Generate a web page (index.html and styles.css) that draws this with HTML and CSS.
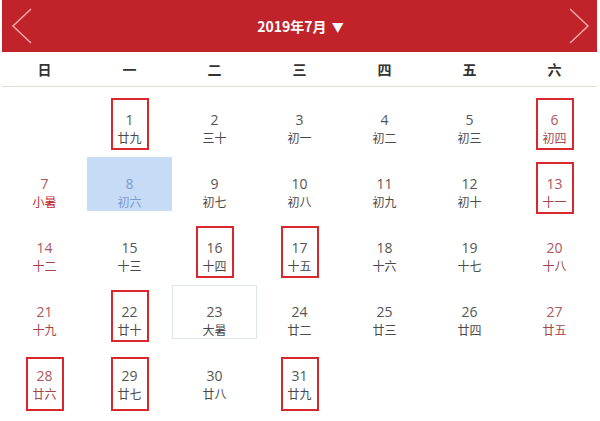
FILE: index.html
```html
<!DOCTYPE html>
<html lang="zh">
<head>
<meta charset="utf-8">
<link rel="stylesheet" href="styles.css">
</head>
<body>
<div class="cal">
  <div class="head">
    <svg class="nav" width="24" height="36" viewBox="0 0 24 36"><polyline points="21,1 3,18 21,35" fill="none" stroke="#f2a3a3" stroke-width="1.6"/></svg>
    <div class="title">2019年7月 <span class="tri">▼</span></div>
    <svg class="nav" width="24" height="36" viewBox="0 0 24 36"><polyline points="3,1 21,18 3,35" fill="none" stroke="#f2a3a3" stroke-width="1.6"/></svg>
  </div>
  <div class="week">
    <span>日</span><span>一</span><span>二</span><span>三</span><span>四</span><span>五</span><span>六</span>
  </div>
  <div class="grid">
    <div class="cell"></div>
    <div class="cell mark"><b>1</b><i>廿九</i></div>
    <div class="cell"><b>2</b><i>三十</i></div>
    <div class="cell"><b>3</b><i>初一</i></div>
    <div class="cell"><b>4</b><i>初二</i></div>
    <div class="cell"><b>5</b><i>初三</i></div>
    <div class="cell we mark"><b>6</b><i>初四</i></div>

    <div class="cell we"><b>7</b><i class="term">小暑</i></div>
    <div class="cell sel"><b>8</b><i>初六</i></div>
    <div class="cell"><b>9</b><i>初七</i></div>
    <div class="cell"><b>10</b><i>初八</i></div>
    <div class="cell"><b>11</b><i>初九</i></div>
    <div class="cell"><b>12</b><i>初十</i></div>
    <div class="cell we mark"><b>13</b><i>十一</i></div>

    <div class="cell we"><b>14</b><i>十二</i></div>
    <div class="cell"><b>15</b><i>十三</i></div>
    <div class="cell mark"><b>16</b><i>十四</i></div>
    <div class="cell mark"><b>17</b><i>十五</i></div>
    <div class="cell"><b>18</b><i>十六</i></div>
    <div class="cell"><b>19</b><i>十七</i></div>
    <div class="cell we"><b>20</b><i>十八</i></div>

    <div class="cell we"><b>21</b><i>十九</i></div>
    <div class="cell mark"><b>22</b><i>廿十</i></div>
    <div class="cell today"><b>23</b><i>大暑</i></div>
    <div class="cell"><b>24</b><i>廿二</i></div>
    <div class="cell"><b>25</b><i>廿三</i></div>
    <div class="cell"><b>26</b><i>廿四</i></div>
    <div class="cell we"><b>27</b><i>廿五</i></div>

    <div class="cell we mark low"><b>28</b><i>廿六</i></div>
    <div class="cell mark low"><b>29</b><i>廿七</i></div>
    <div class="cell"><b>30</b><i>廿八</i></div>
    <div class="cell mark low"><b>31</b><i>廿九</i></div>
  </div>
</div>
</body>
</html>
```

FILE: styles.css
```css
html, body {
  margin: 0;
  padding: 0;
  background: #fff;
}
body {
  font-family: "Open Sans", "Noto Sans CJK SC", sans-serif;
}
.cal {
  width: 595px;
  margin-left: 2px;
}
.head {
  height: 52px;
  background: #c1232a;
  display: flex;
  align-items: center;
  justify-content: space-between;
  padding: 0 6px 0 8px;
}
.title {
  color: #fff;
  font-family: "Noto Sans CJK SC", sans-serif;
  font-size: 14px;
  font-weight: bold;
}
.tri {
  font-size: 12px;
  margin-left: 2px;
}
.week {
  display: grid;
  grid-template-columns: repeat(7, 1fr);
  height: 34px;
  align-items: center;
  border-bottom: 1px solid #e2ddcf;
  font-family: "Noto Sans CJK SC", sans-serif;
  font-size: 14px;
  font-weight: bold;
  color: #333;
  text-align: center;
}
.grid {
  display: grid;
  grid-template-columns: repeat(7, 1fr);
  grid-auto-rows: 54px;
  row-gap: 10px;
  padding: 6px 0 18px;
}
.cell {
  position: relative;
  box-sizing: border-box;
  padding-top: 18px;
  text-align: center;
  color: #4a4a4a;
}
.cell b, .cell i {
  display: block;
  font-style: normal;
  font-weight: normal;
  line-height: 18px;
}
.cell b {
  font-size: 14px;
  color: #555;
}
.cell i {
  font-size: 12px;
  font-family: "Noto Sans CJK SC", sans-serif;
}
.we b {
  color: #b0565d;
}
.we i {
  color: #a5454c;
}
.we i.term {
  color: #c4282e;
}
.sel {
  background: #c6dbf6;
}
.sel b, .sel i {
  color: #7c9ccd;
}
.today {
  border: 1px solid #dfe5ea;
  padding-top: 17px;
}
.mark::after {
  content: "";
  position: absolute;
  left: 50%;
  top: 5px;
  width: 38px;
  height: 52px;
  margin-left: -19px;
  box-sizing: border-box;
  border: 2px solid #d9272e;
}
.mark.low::after {
  top: 8px;
  height: 54px;
}
```
